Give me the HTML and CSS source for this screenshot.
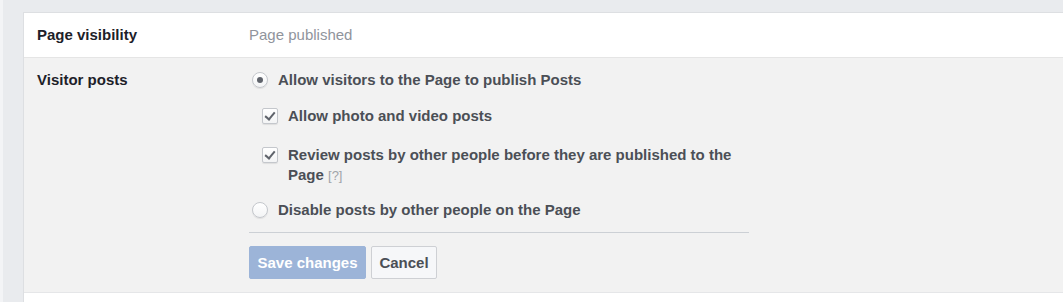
FILE: index.html
```html
<!DOCTYPE html>
<html>
<head>
    <meta charset="UTF-8">
    <meta name="viewport" content="width=device-width, initial-scale=1.0">
    <title>Page settings</title>
    <link rel="stylesheet" href="styles.css">
</head>
<body>
    <div class="page">
        <div class="panel">
            <div class="row row-plain">
                <div class="label">Page visibility</div>
                <div class="value muted">Page published</div>
            </div>

            <div class="row row-edit">
                <div class="label">Visitor posts</div>
                <div class="value">
                    <label class="option">
                        <span class="radio checked"></span>
                        <span>Allow visitors to the Page to publish Posts</span>
                    </label>
                    <div class="sub-options">
                        <label class="option option-photo">
                            <span class="checkbox checked"></span>
                            <span>Allow photo and video posts</span>
                        </label>
                        <label class="option option-review">
                            <span class="checkbox checked"></span>
                            <span>Review posts by other people before they are published to the Page <span class="help">[?]</span></span>
                        </label>
                    </div>
                    <label class="option">
                        <span class="radio"></span>
                        <span>Disable posts by other people on the Page</span>
                    </label>

                    <div class="actions">
                        <button class="btn btn-save" disabled>Save changes</button>
                        <button class="btn btn-cancel">Cancel</button>
                    </div>
                </div>
            </div>

            <div class="row row-plain row-next"></div>
        </div>
    </div>
</body>
</html>
```

FILE: styles.css
```css
body {
    margin: 0;
    background-color: #e9ebee;
    font-family: "Liberation Sans", Arial, Helvetica, sans-serif;
    font-size: 15px;
    line-height: 20px;
    overflow: hidden;
}
.page {
    border-left: 3px solid #f3f4f6;
    padding: 12px 0 0 20px;
    height: 290px;
    overflow: hidden;
}
.panel {
    background: #fff;
    border-top: 1px solid #dddfe2;
    border-left: 1px solid #dddfe2;
}
.row {
    display: flex;
    padding: 12px 13px;
}
.row-plain {
    border-bottom: 1px solid #e5e5e5;
}
.row-edit {
    background: #f2f2f2;
    padding-bottom: 13px;
    border-bottom: 1px solid #e5e6e8;
}
.row-next {
    height: 20px;
    border-bottom: none;
}
.label {
    width: 212px;
    flex-shrink: 0;
    font-weight: bold;
    color: #1d2129;
}
.value {
    width: 500px;
    color: #4b4f56;
    font-weight: bold;
}
.value.muted {
    font-weight: normal;
    color: #90949c;
}
.option {
    display: flex;
    align-items: flex-start;
    gap: 10px;
    padding-left: 3px;
    cursor: pointer;
}
.sub-options {
    padding-left: 10px;
    margin: 16px 0 15px;
}
.option-photo {
    margin-bottom: 19px;
}
.help {
    font-weight: normal;
    font-size: 13px;
    line-height: 1;
    color: #a0a3a9;
}
.radio {
    flex-shrink: 0;
    box-sizing: border-box;
    width: 16px;
    height: 16px;
    margin-top: 2px;
    border: 1px solid #c4c7cc;
    border-radius: 50%;
    background: linear-gradient(#fff, #f3f4f5);
    box-shadow: 0 1px 1px rgba(0,0,0,0.08);
    display: flex;
    align-items: center;
    justify-content: center;
}
.radio.checked::after {
    content: '';
    width: 6px;
    height: 6px;
    border-radius: 50%;
    background: #5f636b;
}
.checkbox {
    flex-shrink: 0;
    box-sizing: border-box;
    width: 16px;
    height: 16px;
    margin-top: 2px;
    border: 1px solid #c4c7cc;
    border-radius: 2px;
    background: linear-gradient(#fff, #f3f4f5);
    box-shadow: 0 1px 1px rgba(0,0,0,0.08);
    position: relative;
}
.checkbox.checked::after {
    content: '';
    position: absolute;
    left: 4px;
    top: 1px;
    width: 4px;
    height: 8px;
    border-right: 2px solid #5f636b;
    border-bottom: 2px solid #5f636b;
    transform: rotate(40deg);
}
.actions {
    display: flex;
    gap: 5px;
    margin-top: 12px;
    padding-top: 13px;
    border-top: 1px solid #ccd0d5;
}
.btn {
    box-sizing: border-box;
    height: 33px;
    padding: 0 7px;
    border: 1px solid;
    border-radius: 2px;
    font-family: inherit;
    font-size: 15px;
    font-weight: bold;
}
.btn-save {
    width: 117px;
    background: #9cb4d8;
    border-color: #9cb4d8;
    color: #fff;
}
.btn-cancel {
    width: 66px;
    background: #f6f7f9;
    border-color: #ced0d4;
    color: #4b4f56;
    cursor: pointer;
}
```
